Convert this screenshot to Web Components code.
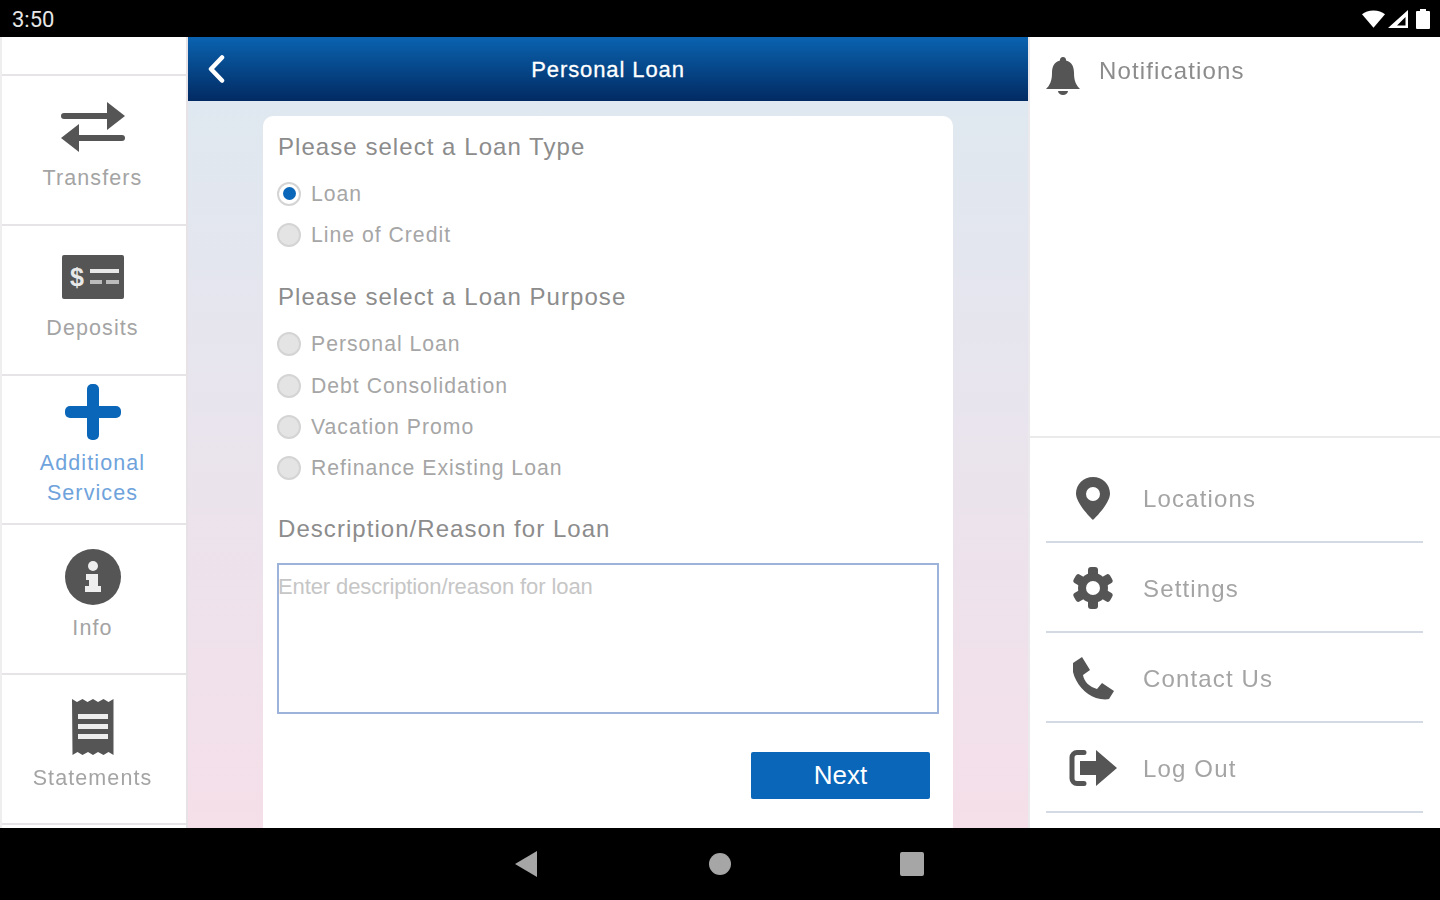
<!DOCTYPE html>
<html lang="en">
<head>
<meta charset="utf-8">
<title>Personal Loan</title>
<style>
  html, body { margin: 0; height: 100%; background: #000; }
  body { font-family: "Liberation Sans", Arial, sans-serif; }
</style>
</head>
<body>
<app-shell>
  <status-bar slot="status" time="3:50"></status-bar>

  <side-rail slot="rail">
    <rail-item>
      <svg slot="icon" width="64" height="50" viewBox="0 0 64 50" fill="#555">
        <rect x="0" y="11" width="50" height="6" rx="3"/><path d="M46 0l18 14-18 14z"/>
        <rect x="14" y="33" width="50" height="6" rx="3"/><path d="M18 22L0 36l18 14z"/>
      </svg>
      Transfers
    </rail-item>
    <rail-item>
      <svg slot="icon" width="62" height="44" viewBox="0 0 62 44">
        <rect width="62" height="44" rx="2" fill="#555"/>
        <text x="8" y="31" font-family="Liberation Sans" font-weight="700" font-size="25" fill="#e8e8e8">$</text>
        <rect x="28" y="14" width="29" height="4" fill="#e8e8e8"/>
        <rect x="28" y="25" width="12" height="4" fill="#bbb"/><rect x="44" y="25" width="13" height="4" fill="#bbb"/>
      </svg>
      Deposits
    </rail-item>
    <rail-item active>
      <svg slot="icon" width="56" height="56" viewBox="0 0 56 56" fill="#0a66b9">
        <rect x="22" y="0" width="12" height="56" rx="5"/><rect x="0" y="22" width="56" height="12" rx="5"/>
      </svg>
      Additional<br>Services
    </rail-item>
    <rail-item>
      <svg slot="icon" width="56" height="56" viewBox="0 0 56 56">
        <circle cx="28" cy="28" r="28" fill="#555"/>
        <circle cx="28" cy="17" r="5" fill="#eee"/>
        <path d="M21 25h12v12h3v6H20v-6h4v-6h-3z" fill="#eee"/>
      </svg>
      Info
    </rail-item>
    <rail-item>
      <svg slot="icon" width="42" height="56" viewBox="0 0 42 56">
        <path d="M0 0l5 3 5.500-3 5 3 5.500-3 5 3 5.500-3 5 3 5-3v56l-5-3-5 3-5.500-3-5 3-5-3-5.500 3-5-3-5 3z" fill="#555"/>
        <rect x="6" y="15" width="30" height="5" fill="#eee"/>
        <rect x="6" y="25" width="30" height="5" fill="#eee"/>
        <rect x="6" y="35" width="30" height="5" fill="#eee"/>
      </svg>
      Statements
    </rail-item>
  </side-rail>

  <page-header slot="header">Personal Loan</page-header>

  <loan-card slot="main">
    <form-title first>Please select a Loan Type</form-title>
    <loan-radio checked>Loan</loan-radio>
    <loan-radio>Line of Credit</loan-radio>
    <form-title gap>Please select a Loan Purpose</form-title>
    <loan-radio>Personal Loan</loan-radio>
    <loan-radio>Debt Consolidation</loan-radio>
    <loan-radio>Vacation Promo</loan-radio>
    <loan-radio>Refinance Existing Loan</loan-radio>
    <form-title last>Description/Reason for Loan</form-title>
    <reason-box>Enter description/reason for loan</reason-box>
    <next-button>Next</next-button>
  </loan-card>

  <side-panel slot="panel">
    <svg slot="bell" width="34" height="38" viewBox="0 0 34 38" fill="#555">
      <path d="M17 0a3 3 0 0 1 3 3.500C26 5 28 10 28 16c0 8 2 12 6 16H0c4-4 6-8 6-16 0-6 2-11 8-12.500A3 3 0 0 1 17 0z"/>
      <path d="M12 34h10a5 4 0 0 1-10 0z"/>
    </svg>
    <side-link>
      <svg slot="icon" width="34" height="43" viewBox="0 0 34 43">
        <path fill-rule="evenodd" fill="#555" d="M17 0C7.600 0 0 7.400 0 16.500 0 27 17 43 17 43s17-16 17-26.500C34 7.400 26.400 0 17 0zm0 10a7 7 0 1 1 0 14 7 7 0 0 1 0-14z"/>
      </svg>
      Locations
    </side-link>
    <side-link>
      <svg slot="icon" width="42" height="42" viewBox="0 0 42 42" fill="#555">
        <rect x="16" y="0" width="10" height="42" rx="3"/>
        <rect x="16" y="0" width="10" height="42" rx="3" transform="rotate(60 21 21)"/>
        <rect x="16" y="0" width="10" height="42" rx="3" transform="rotate(120 21 21)"/>
        <circle cx="21" cy="21" r="15"/>
        <circle cx="21" cy="21" r="7" fill="#fff"/>
      </svg>
      Settings
    </side-link>
    <side-link>
      <svg slot="icon" width="44" height="44" viewBox="0 0 44 44" fill="#555">
        <path d="M2 7L11 1l8 13-7 5c1 7 7 12 14 14l5-6 12 8-5 8c-4 1-9 0-13-1C14 38 5 28 2 16z"/>
      </svg>
      Contact Us
    </side-link>
    <side-link>
      <svg slot="icon" width="48" height="38" viewBox="0 0 48 38">
        <path d="M15 3.500H8a5 5 0 0 0-5 5v21a5 5 0 0 0 5 5h7" fill="none" stroke="#555" stroke-width="5" stroke-linecap="round"/>
        <path d="M11 12h16V1l21 18-21 18V26H11z" fill="#555"/>
      </svg>
      Log Out
    </side-link>
  </side-panel>

  <nav-bar slot="nav"></nav-bar>
</app-shell>

<script>
  function define(name, html, extra) {
    class Element extends HTMLElement {
      constructor() {
        super();
        this.attachShadow({ mode: "open" });
        this.shadowRoot.innerHTML = html;
      }

      connectedCallback() {
        if (extra) extra(this);
      }
    }
    customElements.define(name, Element);
  }

  define("app-shell", `
    <style>
      :host {
        display: grid;
        grid-template-columns: 188px 840px 1fr;
        grid-template-rows: 37px 64px 1fr 72px;
        height: 900px;
        overflow: hidden;
        filter: blur(0.7px);
      }
      .status, .nav { grid-column: 1 / -1; }
      .rail { grid-row: 2 / 4; }
      .panel { grid-column: 3; grid-row: 2 / 4; }
      .rail, .panel, .main { display: grid; min-height: 0; }
      .status, .nav, .header { display: grid; }
    </style>
    <div class="status"><slot name="status"></slot></div>
    <div class="rail"><slot name="rail"></slot></div>
    <div class="header"><slot name="header"></slot></div>
    <div class="panel"><slot name="panel"></slot></div>
    <div class="main"><slot name="main"></slot></div>
    <div class="nav"><slot name="nav"></slot></div>
  `);

  define("status-bar", `
    <style>
      :host {
        display: flex;
        align-items: center;
        justify-content: space-between;
        background: #000;
        color: #e6e6e6;
        font: 22px Roboto, sans-serif;
        padding: 0 10px 0 12px;
      }
      .icons { display: flex; align-items: center; gap: 3px; }
      #time { padding-top: 2px; }
    </style>
    <span id="time"></span>
    <div class="icons">
      <svg width="23" height="18" viewBox="0 0 24 18" fill="#fff"><path d="M0 4C3 1.500 7 0 12 0s9 1.500 12 4L12 18z"/></svg>
      <svg width="20" height="18" viewBox="0 0 20 18"><path d="M20 0v18H0zM17.500 7L9 15.500h8.500z" fill="#fff" fill-rule="evenodd"/></svg>
      <svg style="margin-left:5px" width="14" height="20" viewBox="0 0 14 20" fill="#fff"><path d="M4 0h6v2h3a1 1 0 0 1 1 1v16a1 1 0 0 1-1 1H1a1 1 0 0 1-1-1V3a1 1 0 0 1 1-1h3z"/></svg>
    </div>
  `, (el) => {
    el.shadowRoot.querySelector("#time").textContent = el.getAttribute("time");
  });

  define("side-rail", `
    <style>
      :host {
        display: flex;
        flex-direction: column;
        background: #fff;
        border-left: 2px solid #eee;
        border-right: 2px solid #e6e2e6;
        box-sizing: border-box;
      }
      .stub { height: 37px; border-bottom: 2px solid #e6e4e6; flex: none; }
    </style>
    <div class="stub"></div>
    <slot></slot>
  `);

  define("rail-item", `
    <style>
      :host {
        display: flex;
        flex-direction: column;
        align-items: center;
        justify-content: center;
        box-sizing: border-box;
        height: 149.8px;
        flex: none;
        padding: 0 3px 9px 0;
        border-bottom: 2px solid #e6e4e6;
        color: #a4a4a4;
        font-size: 21.5px;
        line-height: 30px;
        letter-spacing: 1.1px;
        text-align: center;
      }
      :host([active]) { color: #6fa3dc; }
      .icon { height: 60px; display: flex; align-items: center; justify-content: center; margin-bottom: 6px; }
    </style>
    <div class="icon"><slot name="icon"></slot></div>
    <div><slot></slot></div>
  `);

  define("page-header", `
    <style>
      :host {
        display: flex;
        align-items: center;
        justify-content: center;
        position: relative;
        background: linear-gradient(#0a63b0, #022a62);
        color: #fff;
        font-size: 22px;
        letter-spacing: 0.9px;
        -webkit-text-stroke: 0.3px #fff;
      }
      svg { position: absolute; left: 19px; top: 18px; }
      span { padding-top: 1px; }
    </style>
    <svg width="18" height="28" viewBox="0 0 18 28"><path d="M15 2.500L4 14l11 11.500" fill="none" stroke="#fff" stroke-width="4.500" stroke-linecap="round" stroke-linejoin="round"/></svg>
    <span><slot></slot></span>
  `);

  define("loan-card", `
    <style>
      :host {
        display: block;
        background: linear-gradient(#dfe8f0, #f5dfe9);
        padding: 15px 75px 0;
        min-height: 0;
        overflow: hidden;
      }
      .card {
        background: #fff;
        border-radius: 10px 10px 0 0;
        height: 712px;
        box-sizing: border-box;
        padding: 16px 14px 0 14px;
        display: flex;
        flex-direction: column;
      }
    </style>
    <div class="card"><slot></slot></div>
  `);

  define("form-title", `
    <style>
      :host {
        display: block;
        color: #8c8c8c;
        font-size: 24px;
        line-height: 30px;
        letter-spacing: 1.05px;
        margin-left: 1px;
      }
      :host([first]) { margin-bottom: 11px; }
      :host([gap]) { margin-top: 26px; margin-bottom: 12px; }
      :host([last]) { margin-top: 25px; margin-bottom: 19px; }
    </style>
    <slot></slot>
  `);

  define("loan-radio", `
    <style>
      :host {
        display: flex;
        align-items: center;
        height: 41.3px;
        gap: 10px;
        color: #a6a6a6;
        font-size: 21.2px;
        letter-spacing: 1px;
      }
      .dot {
        width: 24px;
        height: 24px;
        box-sizing: border-box;
        border-radius: 50%;
        background: #e4e4e4;
        border: 2px solid #d4d4d4;
        display: flex;
        align-items: center;
        justify-content: center;
      }
      :host([checked]) .dot { background: #fff; }
      :host([checked]) .dot::after {
        content: "";
        width: 13px;
        height: 13px;
        border-radius: 50%;
        background: #0a66b9;
      }
    </style>
    <span class="dot"></span>
    <span><slot></slot></span>
  `);

  define("reason-box", `
    <style>
      :host {
        display: block;
        box-sizing: border-box;
        height: 151px;
        border: 2px solid #9db3da;
        color: #c6c6c6;
        font-size: 22px;
        line-height: 44px;
        letter-spacing: -0.1px;
        text-indent: -1px;
      }
    </style>
    <slot></slot>
  `);

  define("next-button", `
    <style>
      :host {
        display: flex;
        align-items: center;
        justify-content: center;
        align-self: flex-end;
        width: 179px;
        height: 47px;
        margin: 38px 9px 0 0;
        background: #0a66b9;
        border-radius: 2px;
        color: #fff;
        font-size: 26px;
      }
    </style>
    <slot></slot>
  `);

  define("side-panel", `
    <style>
      :host {
        display: flex;
        flex-direction: column;
        background: #fff;
        border-left: 2px solid #ece9ec;
      }
      .notify {
        height: 401px;
        flex: none;
        box-sizing: border-box;
        border-bottom: 2px solid #eaeaea;
        padding: 20px 0 0 16px;
        display: flex;
        align-items: flex-start;
        gap: 19px;
      }
      .notify span { color: #8c8c8c; font-size: 24px; line-height: 28px; letter-spacing: 1.15px; }
      .links { padding: 15px 17px 0 16px; }
    </style>
    <div class="notify"><slot name="bell"></slot><span>Notifications</span></div>
    <div class="links"><slot></slot></div>
  `);

  define("side-link", `
    <style>
      :host {
        display: flex;
        align-items: center;
        box-sizing: border-box;
        height: 90px;
        border-bottom: 2px solid #d3dae4;
        color: #a4a4a4;
        font-size: 24px;
        letter-spacing: 1.15px;
      }
      .icon { width: 97px; flex: none; display: flex; justify-content: center; padding: 2px 3px 0 0; box-sizing: border-box; }
      .text { padding-top: 4px; }
    </style>
    <div class="icon"><slot name="icon"></slot></div>
    <div class="text"><slot></slot></div>
  `);

  define("nav-bar", `
    <style>
      :host {
        display: grid;
        grid-template-columns: repeat(3, 192px);
        justify-content: center;
        justify-items: center;
        align-items: center;
        background: #000;
      }
    </style>
    <svg style="margin-right:4px" width="22" height="26" viewBox="0 0 22 26" fill="#a6a6a6"><path d="M22 0v26L0 13z"/></svg>
    <svg width="24" height="24" viewBox="0 0 24 24" fill="#a6a6a6"><circle cx="12" cy="12" r="11"/></svg>
    <svg width="24" height="24" viewBox="0 0 24 24" fill="#a6a6a6"><rect width="24" height="24" rx="2"/></svg>
  `);
</script>
</body>
</html>
